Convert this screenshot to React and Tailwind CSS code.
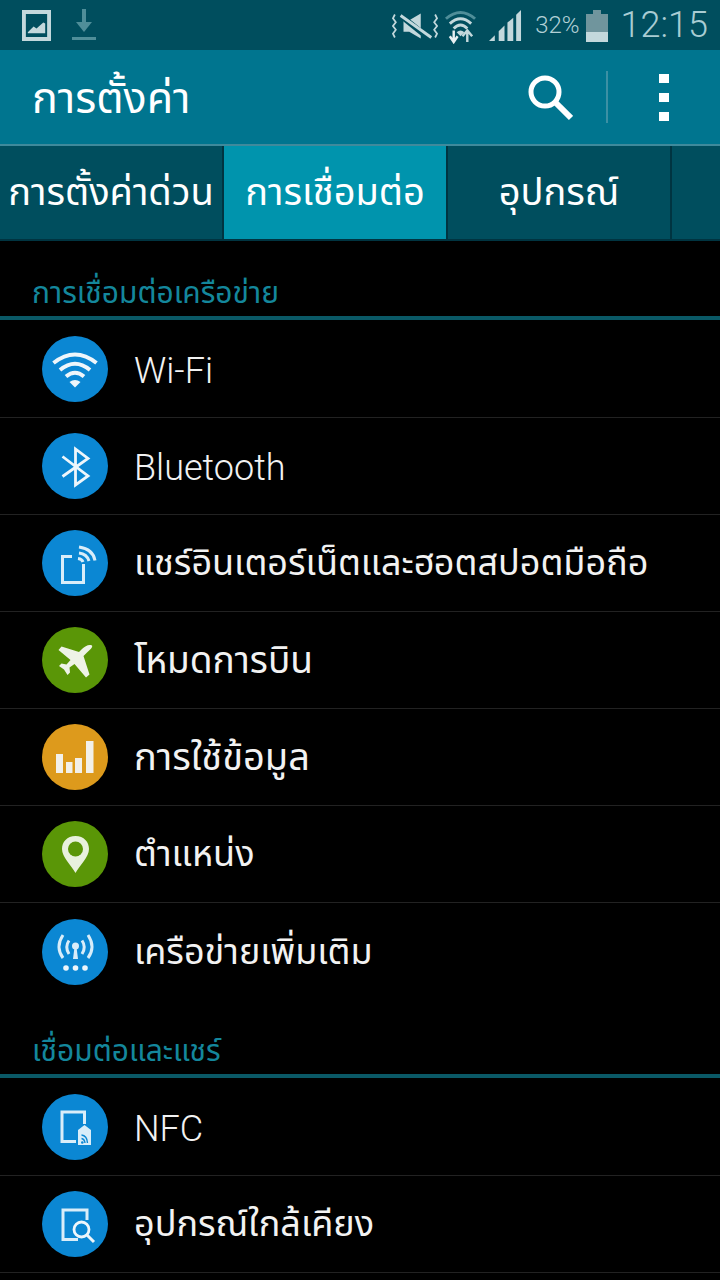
import React from 'react'

const BLUE = 'bg-[#0b87d3]'
const GREEN = 'bg-[#5a9607]'
const ORANGE = 'bg-[#dd9a1c]'

function WifiIcon() {
  return (
    <svg viewBox="0 0 66 66" className="w-[66px] h-[66px]" fill="none" stroke="#eef6fb" strokeWidth="4">
      <path d="M11.500 27 Q33 10 54.500 27" />
      <path d="M18 34 Q33 21.500 48 34" />
      <path d="M24 40.500 Q33 33 42 40.500" />
      <path d="M27.500 46 Q33 42 38.500 46 L33 51.500 Z" fill="#eef6fb" stroke="none" />
    </svg>
  )
}

function BluetoothIcon() {
  return (
    <svg viewBox="0 0 66 66" className="w-[66px] h-[66px]" fill="none" stroke="#eef6fb" strokeWidth="2.800">
      <path d="M20.500 23.500 L46 43 L33.500 52 L33.500 16 L46 25.500 L20.500 43.500" />
    </svg>
  )
}

function HotspotIcon() {
  return (
    <svg viewBox="0 0 66 66" className="w-[66px] h-[66px]" fill="none" stroke="#d9edf9" strokeWidth="3">
      <path d="M30 26.500 H20.500 V52.500 H41.500 V34" />
      <path d="M37 17 Q51 19 53 30.500" />
      <path d="M37 23 Q45 24 47 31" />
      <path d="M36 28.500 Q40 29 41 32" />
    </svg>
  )
}

function PlaneIcon() {
  return (
    <svg viewBox="0 0 66 66" className="w-[66px] h-[66px]" fill="#eef3e6">
      <path d="M50 18.500 C47 17 43 19 40 22 L37 25 L19.500 19.500 L16.500 23 L28.500 33 L24.500 37.500 L19.500 36.500 L17 39 L22 42.500 L25.500 48 L28 45.500 L27.500 40.500 L32.500 37 L44 50.500 L47.500 47.500 L41.500 29 L45 25.500 C48 22.500 51 20.500 50 18.500 Z" />
    </svg>
  )
}

function DataIcon() {
  return (
    <svg viewBox="0 0 66 66" className="w-[66px] h-[66px]" fill="#f2f0ea">
      <rect x="14" y="30" width="7" height="19" />
      <rect x="24" y="38" width="6.500" height="11" />
      <rect x="33" y="34" width="7" height="15" />
      <rect x="44" y="17" width="7.500" height="32" />
    </svg>
  )
}

function PinIcon() {
  return (
    <svg viewBox="0 0 66 66" className="w-[66px] h-[66px]">
      <path d="M33.500 15 C25 15 20 21 20 28 C20 36 29 44 33.500 52 C38 44 47 36 47 28 C47 21 42 15 33.500 15 Z" fill="#e8f1dc" />
      <circle cx="33.500" cy="28" r="7.500" fill="#5a9607" />
    </svg>
  )
}

function MoreNetworksIcon() {
  return (
    <svg viewBox="0 0 66 66" className="w-[66px] h-[66px]" fill="none" stroke="#d9edf9" strokeWidth="3">
      <path d="M21 16 Q13 28 21 39" />
      <path d="M46 16 Q54 28 46 39" />
      <path d="M27 21.500 Q22.500 28 27 35" />
      <path d="M40 21.500 Q44.500 28 40 35" />
      <circle cx="33.500" cy="27" r="3.500" fill="#d9edf9" stroke="none" />
      <path d="M32.500 28 H34.500 L36 40 H31 Z" fill="#d9edf9" stroke="none" />
      <circle cx="24" cy="49" r="2.800" fill="#eef6fb" stroke="none" />
      <circle cx="33.500" cy="49" r="2.800" fill="#eef6fb" stroke="none" />
      <circle cx="43" cy="49" r="2.800" fill="#eef6fb" stroke="none" />
    </svg>
  )
}

function NfcIcon() {
  return (
    <svg viewBox="0 0 66 66" className="w-[66px] h-[66px]" fill="none">
      <path d="M34 47.500 H20 V18 H42.500 V30" stroke="#d9edf9" strokeWidth="3" />
      <path d="M36 36 L42.500 31 L49 36 V51 H36 Z" fill="#d9edf9" />
      <path d="M39.500 41 Q45 41.500 45.500 49 M39.500 44.500 Q42.500 45 43 49" stroke="#0b87d3" strokeWidth="1.400" />
      <circle cx="40.300" cy="48.500" r="1.300" fill="#0b87d3" />
    </svg>
  )
}

function NearbyIcon() {
  return (
    <svg viewBox="0 0 66 66" className="w-[66px] h-[66px]" fill="none" stroke="#d9edf9" strokeWidth="3">
      <path d="M36 48.500 H21 V19 H45 V29" />
      <circle cx="39.500" cy="38.500" r="7.500" strokeWidth="2.800" stroke="#eef6fb" />
      <path d="M45 44 L52 51" stroke="#eef6fb" />
    </svg>
  )
}

function StatusBar() {
  return (
    <div className="h-[50px] bg-[#004e5e] flex items-center justify-between pl-[22px] pr-[12px]">
      <div className="flex items-center gap-[21px]">
        <svg viewBox="0 0 30 32" className="w-[29px] h-[31px] mt-[1px]" fill="#c3d8dc">
          <path fillRule="evenodd" d="M0 0 H30 V32 H0 Z M4 4 V28 H26 V4 Z" />
          <path d="M6 23 L12 17 L15 19 L22 13 L24 14 V24 H6 Z" />
        </svg>
        <svg viewBox="0 0 24 32" className="w-[24px] h-[32px]" fill="#4f8e99">
          <rect x="10" y="0" width="4" height="14" />
          <path d="M4 13 H20 L12 23 Z" />
          <rect x="0" y="28" width="24" height="3" />
        </svg>
      </div>
      <div className="flex items-center">
        <svg viewBox="0 0 48 32" className="w-[46px] h-[32px] mt-[2px]" fill="none" stroke="#c3d8dc">
          <path d="M3 4 L1 8 L4 12 L1 16 L4 20 L1 24 L3 28" strokeWidth="1.800" />
          <path d="M45 4 L47 8 L44 12 L47 16 L44 20 L47 24 L45 28" strokeWidth="1.800" />
          <path d="M12 10 H18 L30 3 V29 L18 22 H12 Z" fill="#c3d8dc" stroke="none" />
          <path d="M9 5 L40 30" stroke="#004e5e" strokeWidth="6" />
          <path d="M9 5 L41 28" strokeWidth="3" />
        </svg>
        <svg viewBox="0 0 34 36" className="w-[33px] h-[35px] ml-[6px] mt-[3px]" fill="none">
          <path d="M2 10 Q17 -3 32 10" stroke="#4f8e99" strokeWidth="3" />
          <path d="M6 15 Q17 5 28 15" stroke="#c3d8dc" strokeWidth="3" />
          <path d="M10 20 Q17 13 24 20" stroke="#c3d8dc" strokeWidth="3" />
          <path d="M13 24 Q17 20 21 24 L17 28 Z" fill="#c3d8dc" />
          <path d="M10 22 V32 M6 28 L10 34 L14 28" stroke="#e8f0f2" strokeWidth="2.500" />
          <path d="M24 34 V22 M19 28 L24 22 L29 28" stroke="#c3d8dc" strokeWidth="2.500" />
        </svg>
        <svg viewBox="0 0 34 34" className="w-[33px] h-[33px] ml-[12px] mt-[2px]" fill="#c3d8dc">
          <path d="M0 32 L6 26 V32 Z" />
          <path d="M10 22 L16 16 V32 H10 Z" />
          <path d="M19 13 L25 8 V32 H19 Z" />
          <path d="M28 5 L33 0 V32 H28 Z" />
        </svg>
        <span className="ml-[13px] text-[24px] leading-none text-[#b3d0d6] font-['Roboto',sans-serif] font-light">32%</span>
        <svg viewBox="0 0 22 32" className="w-[22px] h-[32px] ml-[6px] mt-[1px]">
          <rect x="7" y="0" width="8" height="4" fill="#70959d" />
          <rect x="0" y="4" width="22" height="18" fill="#70959d" />
          <rect x="0" y="22" width="22" height="10" fill="#c3d8dc" />
        </svg>
        <span className="ml-[13px] text-[36px] leading-none text-[#a9ccd3] font-['Roboto',sans-serif] font-light">12:15</span>
      </div>
    </div>
  )
}

function ActionBar() {
  return (
    <div className="h-[96px] bg-[#00758f] flex items-center pl-[32px] border-b-2 border-[#3f8a9c]">
      <h1 className="text-[43px] leading-none text-white mt-[2px]">การตั้งค่า</h1>
      <svg viewBox="0 0 48 48" className="w-[48px] h-[48px] ml-auto" fill="none" stroke="#fff" strokeWidth="5">
        <circle cx="20" cy="19" r="14" />
        <path d="M30 29 L46 45" strokeWidth="6" />
      </svg>
      <div className="ml-[33px] w-[2px] h-[52px] bg-[#3c90a4]" />
      <div className="ml-[51px] mr-[51px] flex flex-col gap-[10px]">
        <div className="w-[10px] h-[9px] bg-white" />
        <div className="w-[10px] h-[9px] bg-white" />
        <div className="w-[10px] h-[9px] bg-white" />
      </div>
    </div>
  )
}

function Tabs() {
  const tabs = [
    { label: 'การตั้งค่าด่วน', w: 'w-[224px]' },
    { label: 'การเชื่อมต่อ', w: 'w-[224px]', active: true },
    { label: 'อุปกรณ์', w: 'w-[224px]' },
    { label: '', w: 'flex-1' },
  ]
  return (
    <div className="h-[95px] flex bg-[#004e5e] border-b-2 border-[#003441]">
      {tabs.map((t, i) => (
        <div
          key={i}
          className={`${t.w} flex items-center justify-center text-[38px] text-white whitespace-nowrap border-r-2 border-[#003441] last:border-0 ${t.active ? 'bg-[#0094ad]' : ''}`}
        >
          {t.label}
        </div>
      ))}
    </div>
  )
}

function Section({ title, className }) {
  return (
    <div className={`flex items-end ${className} pl-[32px] pb-[3px] border-b-4 border-[#0a5966] text-[30px] leading-[40px] text-[#14879c]`}>
      {title}
    </div>
  )
}

function Row({ bg, Icon, label, thai, last }) {
  return (
    <div className={`h-[97px] flex items-center pl-[42px] ${last ? '' : 'border-b border-[#222222]'}`}>
      <div className={`w-[66px] h-[66px] rounded-full ${bg} shrink-0`}>
        <Icon />
      </div>
      <span className={`ml-[26px] leading-none text-[#f2f2f2] whitespace-nowrap ${thai ? `${thai} font-normal` : 'text-[36px] font-light mt-[4px]'}`}>{label}</span>
    </div>
  )
}

export default function App() {
  return (
    <div className="w-[720px] h-[1280px] bg-black overflow-hidden font-['Roboto','Noto_Sans_Thai','Noto_Sans',sans-serif]">
      <StatusBar />
      <ActionBar />
      <Tabs />
      <Section title="การเชื่อมต่อเครือข่าย" className="h-[79px]" />
      <div className="pt-[1px]">
        <Row bg={BLUE} Icon={WifiIcon} label="Wi-Fi" />
        <Row bg={BLUE} Icon={BluetoothIcon} label="Bluetooth" />
        <Row bg={BLUE} Icon={HotspotIcon} label="แชร์อินเตอร์เน็ตและฮอตสปอตมือถือ" thai="text-[36px]" />
        <Row bg={GREEN} Icon={PlaneIcon} label="โหมดการบิน" thai="text-[37px]" />
        <Row bg={ORANGE} Icon={DataIcon} label="การใช้ข้อมูล" thai="text-[38px]" />
        <Row bg={GREEN} Icon={PinIcon} label="ตำแหน่ง" thai="text-[36px]" />
        <Row bg={BLUE} Icon={MoreNetworksIcon} label="เครือข่ายเพิ่มเติม" thai="text-[36px]" last />
      </div>
      <Section title="เชื่อมต่อและแชร์" className="h-[78px]" />
      <div className="pt-[1px]">
        <Row bg={BLUE} Icon={NfcIcon} label="NFC" />
        <Row bg={BLUE} Icon={NearbyIcon} label="อุปกรณ์ใกล้เคียง" thai="text-[36px]" />
      </div>
    </div>
  )
}
